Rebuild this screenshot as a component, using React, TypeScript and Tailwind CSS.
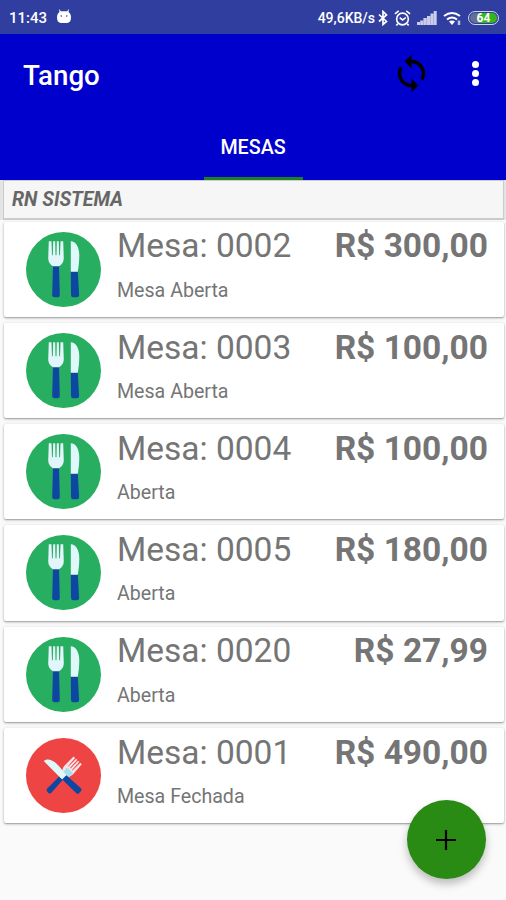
type Table = { id: string; status: string; total: string; closed?: boolean };

const tables: Table[] = [
  { id: "0002", status: "Mesa Aberta", total: "300,00" },
  { id: "0003", status: "Mesa Aberta", total: "100,00" },
  { id: "0004", status: "Aberta", total: "100,00" },
  { id: "0005", status: "Aberta", total: "180,00" },
  { id: "0020", status: "Aberta", total: "27,99" },
  { id: "0001", status: "Mesa Fechada", total: "490,00", closed: true },
];

function Fork({ metal }: { metal: string }) {
  return (
    <>
      <path d="M-3 -4h6l.8 29.500q0 2.500-2.500 2.500h-2.600q-2.500 0-2.500-2.500z" fill="#0d47a1" />
      <path d="M-7.200-28h2.700l.5 14h.8l.4-14h2l.3 14h1l.3-14h2l.4 14h.8l.5-14H7.200l.6 17q0 5-4.800 8h-6q-4.800-3-4.800-8z" fill={metal} />
    </>
  );
}

function Knife() {
  return (
    <>
      <path d="M-4 2h7l1.300 23.500q0 2.500-2.500 2.500h-3.300q-2.300 0-2.300-2.500z" fill="#0d47a1" />
      <path d="M-4-28c5 0 8.500 6 8.500 14 0 6.500-.7 11-1.500 16.500h-7z" fill="#dff9fb" />
    </>
  );
}

function OpenIcon() {
  return (
    <svg viewBox="0 0 75 75" className="size-[75px] shrink-0">
      <circle cx="37.5" cy="37.5" r="37.5" fill="#27ae60" />
      <g transform="translate(30 37.300)"><Fork metal="#e1f5fa" /></g>
      <g transform="translate(48.800 37.300)"><Knife /></g>
    </svg>
  );
}

function ClosedIcon() {
  return (
    <svg viewBox="0 0 75 75" className="size-[75px] shrink-0">
      <circle cx="37.5" cy="37.5" r="37.5" fill="#ef4444" />
      <g transform="translate(36.800 38.300) rotate(43) scale(.78)"><Fork metal="#f9e3e8" /></g>
      <path d="M37 34l4-4.500 6 5.500-4 4.500z" fill="#a5dfeb" />
      <g transform="translate(37 37.500) rotate(-45) scale(.85)"><Knife /></g>
    </svg>
  );
}

function StatusBar() {
  return (
    <div className="flex h-[34px] shrink-0 items-center bg-[#303f9f] pt-[2px] pl-[9px] text-white">
      <span className="w-[39px] text-[15px] leading-none font-medium">11:43</span>
      <svg viewBox="0 0 16 16" className="-mt-1 ml-[8px] size-4" fill="white">
        <path d="M3 1l2 2.300h6L13 1l-.5 3Q15 5.500 15 9.500q0 5-4 5.500H5q-4-.5-4-5.500Q1 5.500 3.500 4z" />
        <circle cx="5.3" cy="8" r=".8" fill="#303f9f" />
        <circle cx="10.7" cy="8" r=".8" fill="#303f9f" />
      </svg>
      <span className="ml-auto text-[14px] leading-none font-medium">49,6KB/s</span>
      <svg viewBox="0 0 10 16" className="ml-[3px] h-4 w-[10px]" fill="none" stroke="white" strokeWidth="1.7">
        <path d="M1 4.500l7.500 7L5 14.500v-13L8.500 5 1 11.500" />
      </svg>
      <svg viewBox="0 0 18 18" className="ml-[6px] size-[17px]" fill="none" stroke="white" strokeWidth="1.7">
        <circle cx="9" cy="9.5" r="6.2" />
        <path d="M1 4l4-3M17 4l-4-3M6 8l3 2.500L12.500 8M4 14.500l-1.500 2M14 14.500l1.500 2" />
      </svg>
      <svg viewBox="0 0 20 14" className="ml-[6px] h-[14px] w-5" fill="#c9cdea">
        <path d="M0 14v-3h3v3zM3.200 14V9.500h3V14zM6.400 14V7h3.400v7zM10 14V5h3.300v9zM13.500 14V2.500h3V14zM16.700 14V0h3v14z" />
      </svg>
      <svg viewBox="0 0 20 16" className="ml-[6px] h-4 w-5" fill="none" stroke="white" strokeWidth="2">
        <path d="M1 6q8-6 16 0M4 9.500q5-4 10 0" />
        <path d="M6 11.500Q9 9.500 12 11.500L9 15z" fill="white" stroke="none" />
        <path d="M16 10.500v4.500" stroke="#b8bfe4" strokeWidth="2.5" />
      </svg>
      <div className="mr-[7px] ml-[5px] flex h-[14px] w-[31px] rounded-full border-[1.5px] border-[#cfd3ee] p-px">
        <div className="flex h-full w-full items-center justify-center rounded-full bg-linear-to-r from-[#64708f] from-25% to-[#35b51c] to-40% text-[12px] leading-none font-bold">64</div>
      </div>
    </div>
  );
}

function TableCard({ table }: { table: Table }) {
  return (
    <div className="flex h-[95.3px] w-[500px] shrink-0 rounded-[2px] bg-white pt-[10px] pr-[16px] pl-[22px] text-[#757575] shadow-[0_1px_3px_rgba(0,0,0,0.3),0_1px_1px_rgba(0,0,0,0.15)]">
      {table.closed ? <ClosedIcon /> : <OpenIcon />}
      <div className="ml-[16px] flex grow flex-col">
        <div className="-mt-[5.3px] flex h-10 items-center justify-between text-[33.5px] leading-10 whitespace-nowrap">
          <span>Mesa: {table.id}</span>
          <span className="font-bold">R$ {table.total}</span>
        </div>
        <span className="mt-[12.3px] text-[19.6px] leading-6">{table.status}</span>
      </div>
    </div>
  );
}

export default function App() {
  return (
    <div className="relative flex h-[900px] w-[506px] flex-col overflow-hidden bg-[#fafafa] font-[Roboto,sans-serif]">
      <StatusBar />
      <header className="flex h-[146px] shrink-0 flex-col bg-[#0000cd] text-white">
        <div className="flex h-[79px] items-center pl-[23px]">
          <h1 className="pt-[4px] text-[27.7px] leading-none font-medium">Tango</h1>
          <svg viewBox="0 0 24 24" className="mr-[40px] ml-auto size-[41px]" fill="black">
            <path d="M12 4V1L8 5l4 4V6c3.310 0 6 2.690 6 6 0 1.010-.25 1.970-.7 2.800l1.460 1.460C19.540 15.030 20 13.570 20 12c0-4.420-3.580-8-8-8zm0 14c-3.310 0-6-2.690-6-6 0-1.010.25-1.970.7-2.800L5.240 7.740C4.460 8.970 4 10.430 4 12c0 4.420 3.580 8 8 8v3l4-4-4-4v3z" />
          </svg>
          <div className="mr-[27px] flex flex-col gap-[2px]">
            <i className="size-[7px] rounded-full bg-white" />
            <i className="size-[7px] rounded-full bg-white" />
            <i className="size-[7px] rounded-full bg-white" />
          </div>
        </div>
        <nav className="mx-auto flex h-[67px] w-[99px] items-center justify-center border-b-[3px] border-[#1b7f24] pt-[6px] text-[19.7px] leading-none font-medium">MESAS</nav>
      </header>
      <div className="flex h-[40px] shrink-0 bg-[#e4e4e4] pr-[2px] pl-[3px]">
        <div className="flex grow items-center border border-b-2 border-[#cbcbcb] bg-[#f6f6f6] pt-px pl-[8px] text-[19.5px] leading-none font-bold text-[#666] italic">RN SISTEMA</div>
      </div>
      <main className="mt-[1.5px] flex flex-col gap-[6px] pl-[4px]">
        {tables.map((table) => (
          <TableCard key={table.id} table={table} />
        ))}
      </main>
      <button className="absolute top-[800px] left-[407px] flex size-[79px] items-center justify-center rounded-full bg-[#2a8b14] shadow-[0_5px_9px_rgba(0,0,0,0.25)]">
        <svg viewBox="0 0 20 20" className="size-5 -translate-x-px" stroke="black" strokeWidth="2.2">
          <path d="M0 10h20M10 0v20" />
        </svg>
      </button>
    </div>
  );
}
